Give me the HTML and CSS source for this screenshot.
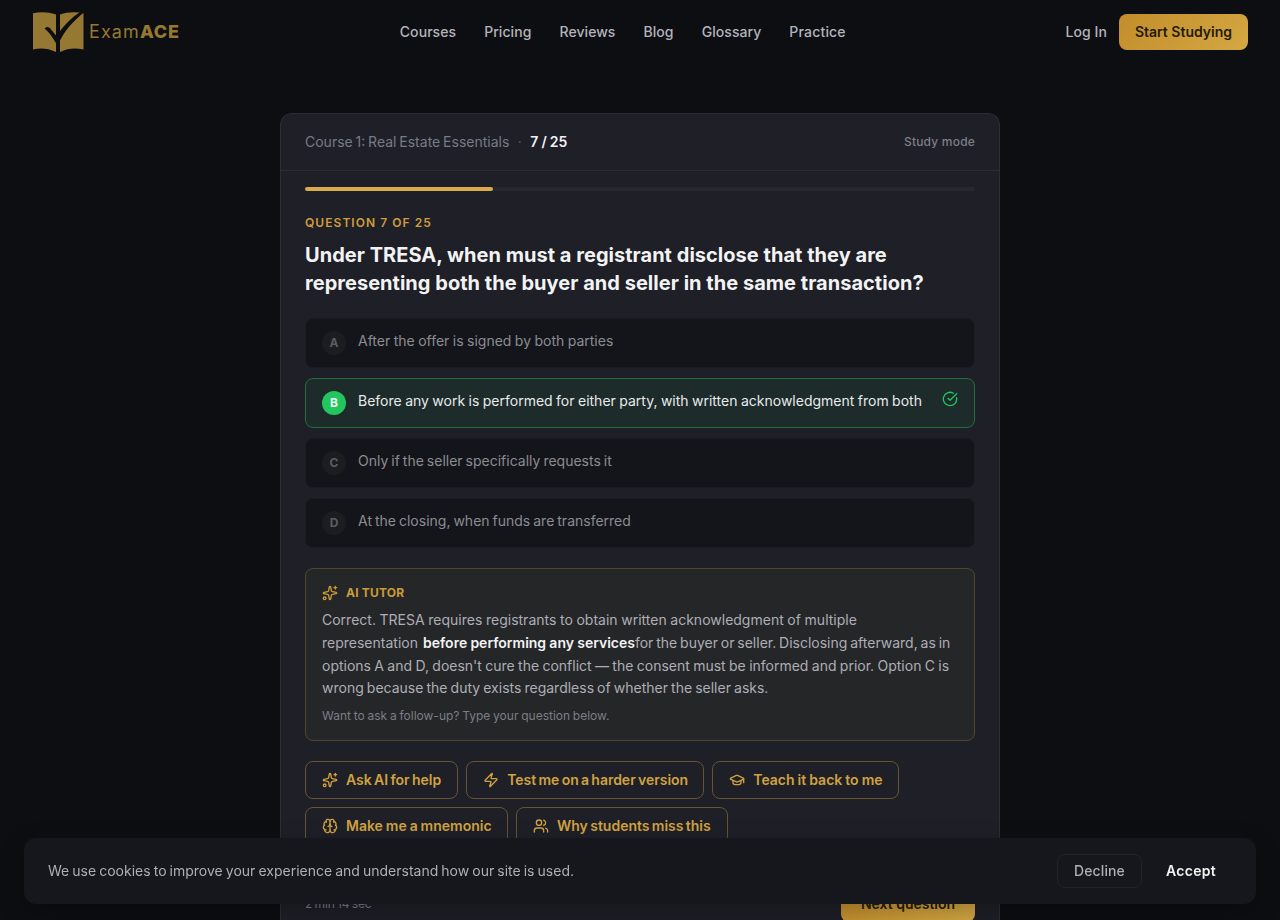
FILE: index.html
```html
<!DOCTYPE html>
<html lang="en">
<head>
<meta charset="utf-8">
<title>ExamACE</title>
<link rel="stylesheet" href="styles.css">
</head>
<body>
<svg class="sprite" aria-hidden="true">
  <symbol id="sparkles" viewBox="0 0 24 24"><path d="M11.017 2.814a1 1 0 0 1 1.966 0l1.051 5.558a2 2 0 0 0 1.594 1.594l5.558 1.051a1 1 0 0 1 0 1.966l-5.558 1.051a2 2 0 0 0-1.594 1.594l-1.051 5.558a1 1 0 0 1-1.966 0l-1.051-5.558a2 2 0 0 0-1.594-1.594l-5.558-1.051a1 1 0 0 1 0-1.966l5.558-1.051a2 2 0 0 0 1.594-1.594z"/><path d="M20 2v4M22 4h-4"/><circle cx="4" cy="20" r="2"/></symbol>
  <symbol id="zap" viewBox="0 0 24 24"><path d="M4 14a1 1 0 0 1-.78-1.63l9.9-10.2a.5.5 0 0 1 .86.46l-1.92 6.02A1 1 0 0 0 13 10h7a1 1 0 0 1 .78 1.63l-9.9 10.2a.5.5 0 0 1-.86-.46l1.92-6.02A1 1 0 0 0 11 14z"/></symbol>
  <symbol id="cap" viewBox="0 0 24 24"><path d="M21.42 10.922a1 1 0 0 0-.019-1.838L12.83 5.18a2 2 0 0 0-1.66 0L2.6 9.08a1 1 0 0 0 0 1.832l8.57 3.908a2 2 0 0 0 1.66 0z"/><path d="M22 10v6"/><path d="M6 12.5V16a6 3 0 0 0 12 0v-3.5"/></symbol>
  <symbol id="brain" viewBox="0 0 24 24"><path d="M12 18V5"/><path d="M15 13a4.17 4.17 0 0 1-3-4 4.17 4.17 0 0 1-3 4"/><path d="M17.598 6.5A3 3 0 1 0 12 5a3 3 0 1 0-5.598 1.5"/><path d="M17.997 5.125a4 4 0 0 1 2.526 5.77"/><path d="M18 18a4 4 0 0 0 2-7.464"/><path d="M19.967 17.483A4 4 0 1 1 12 18a4 4 0 1 1-7.967-.517"/><path d="M6 18a4 4 0 0 1-2-7.464"/><path d="M6.003 5.125a4 4 0 0 0-2.526 5.77"/></symbol>
  <symbol id="users" viewBox="0 0 24 24"><path d="M16 21v-2a4 4 0 0 0-4-4H6a4 4 0 0 0-4 4v2"/><circle cx="9" cy="7" r="4"/><path d="M22 21v-2a4 4 0 0 0-3-3.87"/><path d="M16 3.13a4 4 0 0 1 0 7.75"/></symbol>
  <symbol id="check" viewBox="0 0 24 24"><path d="M21.801 10A10 10 0 1 1 17 3.335"/><path d="m9 11 3 3L22 4"/></symbol>
</svg>

<header class="nav">
  <a class="logo">
    <svg class="logo-mark" viewBox="0 0 52 42"><path class="page" d="M1 2.2C8 .6 16 .6 24 3.500V41C16 37 8 36.800 1 38.500Z"/><path class="page" d="M28 3.500C36 .6 44 .6 51.500 2.200V38.500C44 36.800 36 37 28 41Z"/><path class="tick" d="M12.500 17.500C14.500 15 17.500 15.500 19 18.500L24.500 25C31 15.500 39 6.500 49 .500L51.500 1.800C42 9.500 33 19 27 31.500H23.500C20.500 26 16.500 20.500 12.500 17.500Z"/><path class="tick" d="M24 26h4v16h-4z"/></svg>
    <span class="logo-text">Exam<b>ACE</b></span>
  </a>
  <nav class="links"><a>Courses</a><a>Pricing</a><a>Reviews</a><a>Blog</a><a>Glossary</a><a>Practice</a></nav>
  <div class="account"><a>Log In</a><a class="start">Start Studying</a></div>
</header>

<main class="card">
  <div class="card-head">
    <div class="course"><span>Course 1: Real Estate Essentials</span><span class="dot">·</span><b>7 / 25</b></div>
    <span class="mode">Study mode</span>
  </div>
  <div class="card-body">
    <div class="progress"><div class="progress-fill"></div></div>
    <div class="eyebrow">Question 7 of 25</div>
    <h1>Under TRESA, when must a registrant disclose that they are<br>representing both the buyer and seller in the same transaction?</h1>
    <div class="options">
      <div class="option"><span class="letter">A</span><span class="short">After the offer is signed by both parties</span></div>
      <div class="option correct"><span class="letter">B</span><span class="answer">Before any work is performed for either party, with written acknowledgment from both</span><svg class="icon"><use href="#check"/></svg></div>
      <div class="option"><span class="letter">C</span><span>Only if the seller specifically requests it</span></div>
      <div class="option"><span class="letter">D</span><span>At the closing, when funds are transferred</span></div>
    </div>
    <section class="tutor">
      <div class="tutor-head"><svg class="icon"><use href="#sparkles"/></svg>AI TUTOR</div>
      <p class="explain"><span class="loose">Correct. TRESA requires registrants to obtain written acknowledgment of multiple</span><br><span class="lead">representation </span><b>before performing any services</b><span class="tight">for the buyer or seller. Disclosing afterward, as in</span><br><span class="third">options A and D, doesn't cure the conflict — the consent must be informed and prior. Option C is</span><br>wrong because the duty exists regardless of whether the seller asks.</p>
      <p class="follow">Want to ask a follow-up? Type your question below.</p>
    </section>
    <div class="actions">
      <a><svg class="icon"><use href="#sparkles"/></svg><span>Ask AI for help</span></a>
      <a class="harder"><svg class="icon"><use href="#zap"/></svg><span>Test me on a harder version</span></a>
      <a class="teach"><svg class="icon"><use href="#cap"/></svg><span>Teach it back to me</span></a>
      <a class="mnemonic"><svg class="icon"><use href="#brain"/></svg><span>Make me a mnemonic</span></a>
      <a><svg class="icon"><use href="#users"/></svg><span>Why students miss this</span></a>
    </div>
    <div class="card-foot"><span>2 min 14 sec</span><a class="next">Next question</a></div>
  </div>
</main>

<aside class="cookies">
  <span class="cookie-text">We use cookies to improve your experience and understand how our site is used.</span>
  <div class="cookie-actions"><a class="decline">Decline</a><a class="accept">Accept</a></div>
</aside>
</body>
</html>
```
FILE: styles.css
```css
* { box-sizing: border-box; margin: 0; }
html { height: 920px; overflow: hidden; background: #0d0e12; }
body {
  height: 920px;
  overflow: hidden;
  display: flex; flex-direction: column;
  font: 400 14px/20px Inter, "Liberation Sans", sans-serif;
  color: #a9abb5;
  white-space: nowrap;
}
.sprite { position: absolute; width: 0; height: 0; }
.icon {
  width: 16px; height: 16px; flex: none;
  fill: none; stroke: currentColor; stroke-width: 2;
  stroke-linecap: round; stroke-linejoin: round;
}

.nav { display: flex; flex: none; align-items: center; justify-content: space-between; height: 64px; padding: 0 32px; font-weight: 450; letter-spacing: .07px; }
.logo { display: flex; align-items: center; gap: 5px; width: 148px; color: #957933; }
.logo-mark { width: 52px; height: 42px; flex: none; }
.page { fill: #957933; }
.tick { fill: #0d0e12; }
.logo-text { font-size: 18px; font-weight: 400; letter-spacing: 1.1px; }
.logo-text b { font-weight: 800; letter-spacing: .8px; }
.links { display: flex; gap: 28px; color: #b4b4bc; }
.links a:last-child { letter-spacing: .18px; }
.account { display: flex; align-items: center; gap: 12px; color: #b4b4bc; }
.start {
  width: 129px; padding: 8px 0; border-radius: 8px; text-align: center;
  font-weight: 600; letter-spacing: 0; color: #241a09;
  background: linear-gradient(135deg, #c28d2b, #d4a843);
}

.card { flex: 1; min-height: 0; overflow: hidden; width: 720px; margin: 49px auto 0; border: 1px solid #2c2d35; border-bottom: 0; border-radius: 12px 12px 0 0; background: #1e1f27; }
.card-head { display: flex; align-items: center; justify-content: space-between; height: 57px; padding: 0 24px; border-bottom: 1px solid #2a2b33; }
.course { display: flex; color: #777b87; word-spacing: -1.1px; }
.course .dot { width: 21px; text-align: center; color: #555963; }
.course b { font-weight: 600; color: #f1f1f3; word-spacing: -.5px; }
.mode { font-size: 12px; font-weight: 450; letter-spacing: .2px; color: #7c7e88; }
.card-body { padding: 16px 24px 0; }
.progress { height: 4px; border-radius: 2px; background: #26272f; }
.progress-fill { width: 28%; height: 4px; border-radius: 2px; background: #d9ab4c; }
.eyebrow { margin-top: 24px; font-size: 12px; line-height: 16px; font-weight: 600; letter-spacing: 1.05px; text-transform: uppercase; color: #cf9d3d; }
h1 { margin-top: 10px; font-size: 20px; line-height: 28px; font-weight: 700; letter-spacing: .03px; color: #f3f3f4; }

.options { display: flex; flex-direction: column; gap: 10px; margin-top: 21px; word-spacing: -.95px; }
.option { display: flex; align-items: flex-start; gap: 12px; height: 50px; padding: 12px 16px; border: 1px solid #1b1c22; border-radius: 8px; background: #14151a; color: #8b8c92; }
.short { word-spacing: -.5px; }
.letter { display: flex; align-items: center; justify-content: center; width: 24px; height: 24px; border-radius: 50%; background: #1c1d21; font-size: 12px; font-weight: 700; color: #5b5c62; }
.correct { border-color: #23703f; background: #1d2b2b; color: #e8eaea; word-spacing: -.5px; }
.correct .letter { background: #22c55e; color: #eefbf2; }
.correct .icon { margin-left: auto; color: #22c55e; }

.tutor { height: 173px; margin-top: 20px; padding: 16px; border: 1px solid #51462d; border-radius: 8px; background: #252628; }
.tutor-head { display: flex; align-items: center; gap: 8px; height: 16px; font-size: 12px; font-weight: 700; letter-spacing: .2px; color: #cc9b38; }
.explain { margin-top: 8px; line-height: 22.75px; word-spacing: -.85px; color: #adaeb6; }
.explain b { font-weight: 600; color: #f3f3f4; word-spacing: -.3px; }
.explain .loose { word-spacing: -.3px; }
.explain .lead { word-spacing: 1.1px; }
.explain .third { word-spacing: -.58px; }
.explain .tight { word-spacing: -1.1px; }
.follow { margin-top: 8px; font-size: 12px; line-height: 16px; word-spacing: -.6px; color: #7b7e85; }

.actions { display: flex; flex-wrap: wrap; gap: 8px; margin-top: 20px; word-spacing: -1.2px; font-weight: 600; color: #d0a241; }
.actions a { display: flex; align-items: center; gap: 8px; height: 38px; padding: 0 16px; border: 1px solid #665433; border-radius: 8px; }
.actions .harder { width: 238px; letter-spacing: -.02px; }
.actions .teach { width: 187px; word-spacing: -.5px; }
.actions .mnemonic { width: 203px; word-spacing: -.6px; }
.card-foot { display: flex; align-items: center; justify-content: space-between; margin-top: 41px; font-size: 12px; color: #777a85; word-spacing: -1px; letter-spacing: -.1px; }
.next { width: 134px; padding: 8px 0; border-radius: 8px; text-align: center; font-size: 14px; letter-spacing: 0; word-spacing: 0; font-weight: 600; color: #241a09; background: linear-gradient(135deg, #c28d2b, #d4a843); }

.cookies {
  position: fixed; left: 24px; right: 24px; bottom: 16px;
  display: flex; align-items: center; justify-content: space-between;
  height: 66px; padding: 0 24px; border-radius: 12px;
  background: #16171c; box-shadow: 0 8px 24px rgba(0, 0, 0, .25); color: #adaeb6;
}
.cookie-text { word-spacing: -.87px; }
.cookie-actions { display: flex; gap: 8px; font-weight: 500; }
.cookie-actions a { width: 85px; height: 34px; line-height: 32px; border: 1px solid transparent; border-radius: 8px; text-align: center; }
.cookie-actions .decline { border-color: #22232a; letter-spacing: .1px; }
.cookie-actions .accept { width: 82px; font-weight: 600; letter-spacing: .3px; color: #f3f3f4; }
```
